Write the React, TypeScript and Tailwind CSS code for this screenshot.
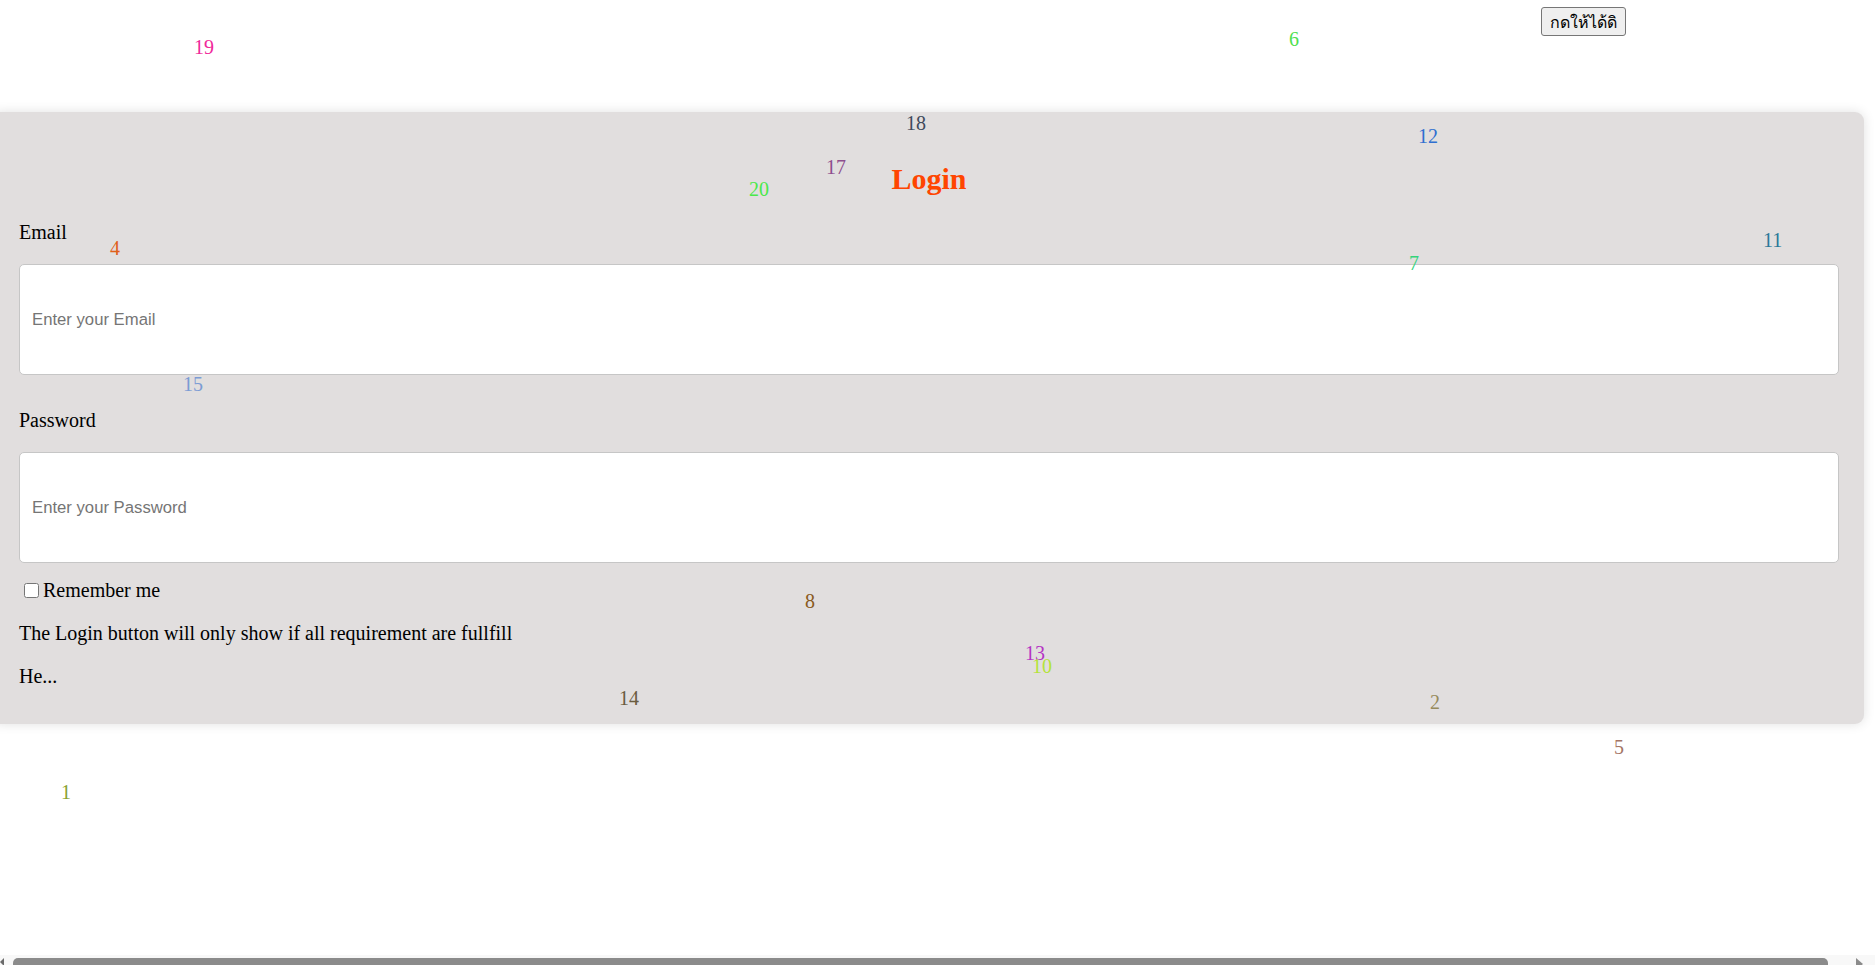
import { useState } from "react";

const numbers = [
  { n: "19", x: 194, cy: 47, color: "text-[#f0289a]" },
  { n: "6", x: 1289, cy: 39, color: "text-[#50e050]" },
  { n: "18", x: 906, cy: 123, color: "text-[#3f4a5c]" },
  { n: "12", x: 1418, cy: 136, color: "text-[#2f6fd0]" },
  { n: "17", x: 826, cy: 167, color: "text-[#8e4e8e]" },
  { n: "20", x: 749, cy: 189, color: "text-[#4ae84a]" },
  { n: "4", x: 110, cy: 248, color: "text-[#e0601a]" },
  { n: "11", x: 1763, cy: 240, color: "text-[#2a7898]" },
  { n: "7", x: 1409, cy: 263, color: "text-[#33d37a]" },
  { n: "15", x: 183, cy: 384, color: "text-[#7b9bd4]" },
  { n: "8", x: 805, cy: 601, color: "text-[#8a5a20]" },
  { n: "13", x: 1025, cy: 653, color: "text-[#b535c4]" },
  { n: "10", x: 1032, cy: 666, color: "text-[#b4e33a]" },
  { n: "14", x: 619, cy: 698, color: "text-[#6b5c3e]" },
  { n: "2", x: 1430, cy: 702, color: "text-[#968a5c]" },
  { n: "5", x: 1614, cy: 747, color: "text-[#a47464]" },
  { n: "1", x: 61, cy: 792, color: "text-[#8aa22f]" },
];

function Field({ label, placeholder, type, top }: { label: string; placeholder: string; type: string; top: string }) {
  return (
    <div className={top}>
      <label className="block text-[20px] leading-[22px]">{label}</label>
      <input
        type={type}
        placeholder={placeholder}
        className="mt-[21px] block h-[111px] w-full rounded-[5px] border border-[#c6c6c6] bg-white px-[12px] font-['Liberation_Sans',Arial,sans-serif] text-[16.7px] text-black placeholder:text-[#757575] outline-none"
      />
    </div>
  );
}

export default function App() {
  const [remember, setRemember] = useState(false);

  return (
    <div className="relative h-[965px] w-full overflow-hidden bg-white font-['Liberation_Serif','Times_New_Roman',serif] text-black">
      <div className="flex h-[112px] justify-end pr-[249px] pt-[7px]">
        <button className="h-[29px] self-start rounded-[3px] border border-[#767676] bg-[#efefef] px-[8px] font-['Noto_Sans','Liberation_Sans',sans-serif] text-[16px] leading-[20px] text-black">
          กดให้ได้ดิ
        </button>
      </div>

      <div className="-ml-[8px] mr-[11px] rounded-[9px] bg-[#e1dede] pb-[37px] pl-[27px] pr-[25px] pt-[50px] shadow-[0_0_12px_rgba(0,0,0,0.12)]">
        <h2 className="text-center text-[30px] font-bold leading-[33px] text-[#ff4500]">Login</h2>

        <Field label="Email" placeholder="Enter your Email" type="email" top="mt-[26px]" />
        <Field label="Password" placeholder="Enter your Password" type="password" top="mt-[34px]" />

        <label className="mt-[16px] flex items-center text-[20px] leading-[22px]">
          <input
            type="checkbox"
            checked={remember}
            onChange={(e) => setRemember(e.target.checked)}
            className="ml-[5px] mr-[4px] h-[15px] w-[15px]"
          />
          Remember me
        </label>
        <p className="mt-[21px] text-[20px] leading-[22px]">
          The Login button will only show if all requirement are fullfill
        </p>
        <p className="mt-[21px] text-[20px] leading-[22px]">He...</p>
      </div>

      {numbers.map((item) => (
        <span
          key={item.n}
          className={`absolute text-[20px] leading-[22px] ${item.color}`}
          style={{ left: item.x, top: item.cy - 11 }}
        >
          {item.n}
        </span>
      ))}

      {/* horizontal scrollbar strip */}
      <div className="absolute bottom-0 left-0 right-0 h-[10px] overflow-hidden bg-[#f8f8f8]">
        <svg className="absolute left-0 top-[3px]" width="4" height="8" viewBox="0 0 4 8">
          <path d="M4 0 L0 4 L4 8 Z" fill="#6b6b6b" />
        </svg>
        <div className="absolute left-[13px] top-[3px] h-[12px] w-[1815px] rounded-[5px] bg-[#8b8b8b]" />
        <svg className="absolute left-[1856px] top-[3px]" width="7" height="8" viewBox="0 0 7 8">
          <path d="M0 0 L7 6 L0 12 Z" fill="#8b8b8b" />
        </svg>
      </div>
    </div>
  );
}
